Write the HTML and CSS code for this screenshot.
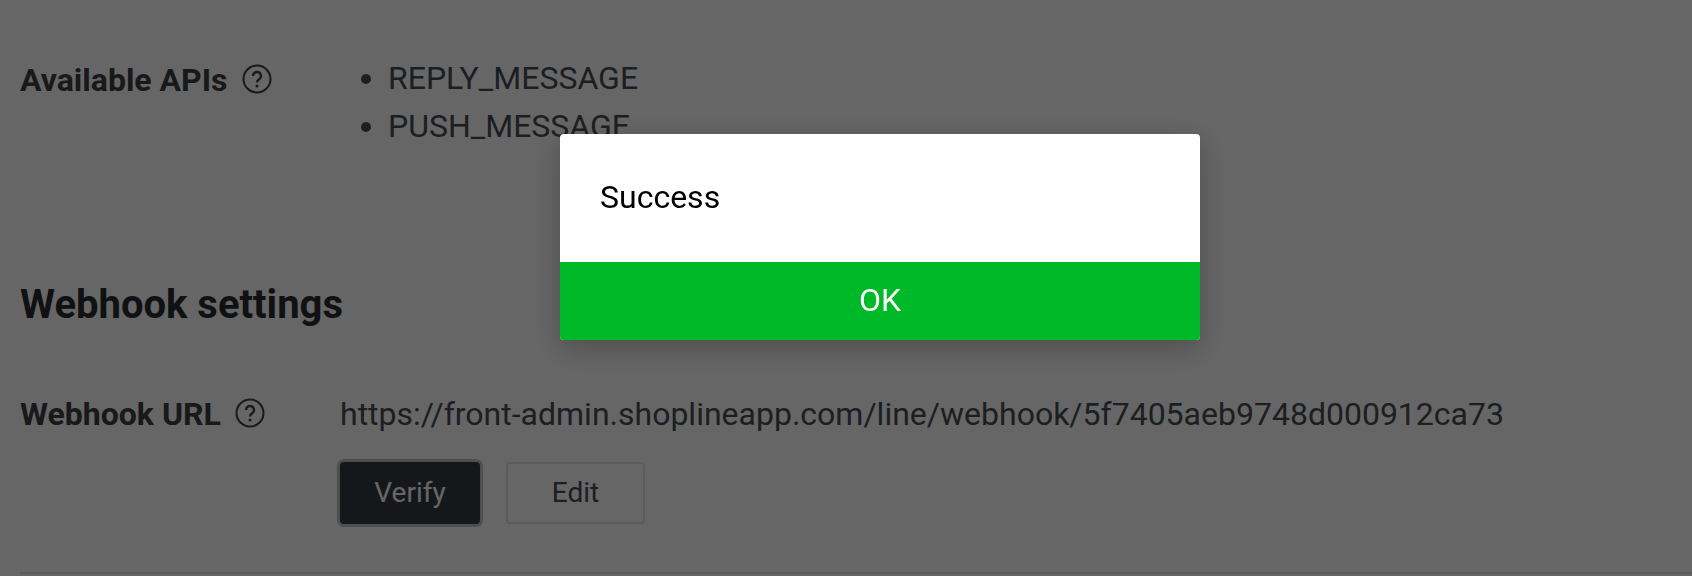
FILE: index.html
```html
<!DOCTYPE html>
<html>
<head>
    <title>Messaging API</title>
    <link rel="stylesheet" href="styles.css">
</head>
<body>
    <div class="page">
        <div class="row">
            <div class="label">
                <span>Available APIs</span>
                <svg class="help" viewBox="0 0 30 30"><circle cx="15" cy="15" r="13.5"/><path class="mark" d="M11 12a4 4 0 1 1 6.2 3.3c-1.4.9-2.2 1.6-2.2 3.2"/><circle class="dot" cx="15" cy="22" r="1.5"/></svg>
            </div>
            <ul class="api-list">
                <li>REPLY_MESSAGE</li>
                <li>PUSH_MESSAGE</li>
            </ul>
        </div>

        <h2>Webhook settings</h2>

        <div class="row url-row">
            <div class="label">
                <span>Webhook URL</span>
                <svg class="help" viewBox="0 0 30 30"><circle cx="15" cy="15" r="13.5"/><path class="mark" d="M11 12a4 4 0 1 1 6.2 3.3c-1.4.9-2.2 1.6-2.2 3.2"/><circle class="dot" cx="15" cy="22" r="1.5"/></svg>
            </div>
            <div class="value">
                <div class="url">https://front-admin.shoplineapp.com/line/webhook/5f7405aeb9748d000912ca73</div>
                <div class="buttons">
                    <button class="btn btn-dark">Verify</button>
                    <button class="btn btn-edit">Edit</button>
                </div>
            </div>
        </div>
        <hr class="divider">
    </div>

    <div class="overlay"></div>
    <div class="modal">
        <div class="modal-body">Success</div>
        <button class="modal-ok">OK</button>
    </div>
</body>
</html>
```

FILE: styles.css
```css
body {
    margin: 0;
    height: 576px;
    overflow: hidden;
    font-family: Roboto, Arial, sans-serif;
    background: #fff;
    color: #484e55;
}

.page {
    padding: 54px 0 0 20px;
}

.row {
    display: flex;
}

.label {
    display: flex;
    align-items: center;
    align-self: flex-start;
    width: 320px;
    height: 48px;
    margin-top: 2px;
    flex-shrink: 0;
    font-size: 32px;
    font-weight: 700;
    color: #3c4045;
}

.help {
    width: 30px;
    height: 30px;
    margin: -2px 0 0 14px;
    fill: none;
    stroke: #3c4045;
    stroke-width: 2;
}

.help .mark {
    stroke-width: 2.4;
}

.help .dot {
    fill: #3c4045;
    stroke: none;
}

.api-list {
    margin: 0;
    padding: 0 0 0 48px;
    font-size: 32px;
    line-height: 48px;
    width: 400px;
}

h2 {
    margin: 131px 0 0;
    font-size: 40px;
    line-height: 48px;
    font-weight: 700;
    color: #2a2c2e;
}

.url-row {
    margin-top: 61px;
}

.url-row .label {
    margin-top: 0;
}

.url {
    font-size: 32px;
    line-height: 48px;
}

.buttons {
    display: flex;
    gap: 26px;
    margin-top: 24px;
}

.btn {
    width: 140px;
    height: 62px;
    padding: 0 0 2px;
    background: #fff;
    border: 2px solid #dfe1e3;
    border-radius: 4px;
    font-family: Roboto, Arial, sans-serif;
    font-size: 28px;
    color: #484e55;
}

.btn-edit {
    width: 139px;
}

.btn-dark {
    background: #363a41;
    border: none;
    box-shadow: 0 0 0 3px #c0c2c4;
    color: #fff;
}

.divider {
    margin: 48px 0 0;
    border: 0;
    border-top: 2px solid #dfe1e3;
}

.overlay {
    position: fixed;
    top: 0;
    left: 0;
    right: 0;
    bottom: 0;
    background: rgba(0,0,0,0.6);
}

.modal {
    position: fixed;
    top: 134px;
    left: 560px;
    width: 640px;
    border-radius: 4px;
    overflow: hidden;
    background: #fff;
    box-shadow: 0 8px 30px rgba(0,0,0,0.25);
}

.modal-body {
    height: 128px;
    padding: 0 40px;
    line-height: 127px;
    font-size: 32px;
    color: #000;
}

.modal-ok {
    display: block;
    width: 100%;
    height: 78px;
    padding: 0 0 2px;
    border: none;
    background: #00b928;
    color: #fff;
    font-family: Roboto, Arial, sans-serif;
    font-size: 32px;
}
```
